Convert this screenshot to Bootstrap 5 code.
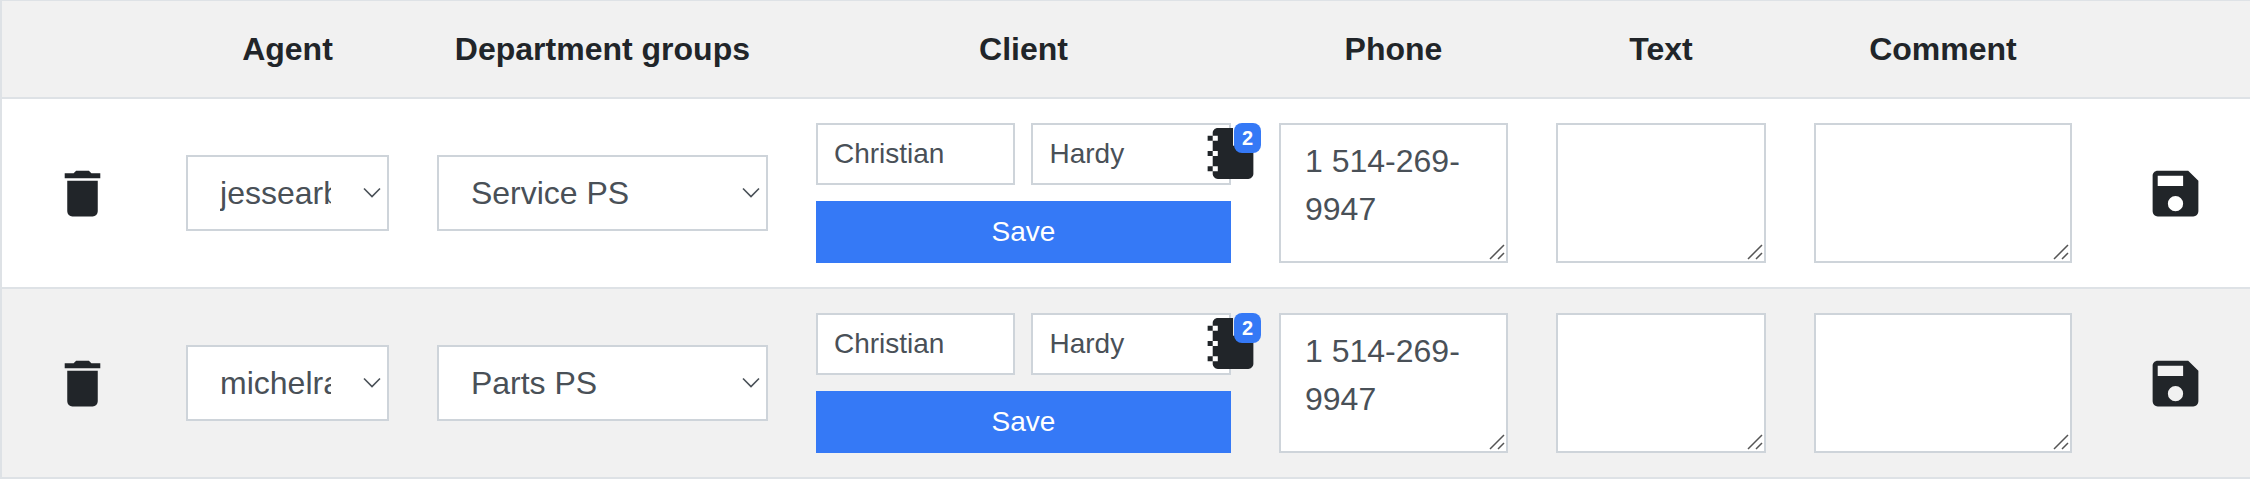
<!DOCTYPE html>
<html lang="en">
<head>
<meta charset="utf-8">
<meta name="viewport" content="width=device-width, initial-scale=1">
<title>Agents</title>
<link rel="stylesheet" href="https://cdn.jsdelivr.net/npm/bootstrap@5.3.0/dist/css/bootstrap.min.css">
<style>
  :root { --line: #dee2e6; --field-line: #ced4da; --field-text: #495057; --brand: #3579f6; --ink: #212529; }
  body { font-family: "Liberation Sans", Arial, sans-serif; font-size: 32px; line-height: 48px; color: var(--ink); background: #fff; }

  .agents-frame { border-top: 1px solid var(--line); border-left: 2px solid var(--line); }
  .agents { table-layout: fixed; border-collapse: separate; border-spacing: 0; color: var(--ink); }
  .agents > * > tr > * { padding: 24px; border: 0; border-bottom: 2px solid var(--line); box-shadow: none; background: transparent; }
  .agents > * > tr > :last-child { padding-right: 18px; }
  .agents thead tr, .agents tbody tr:nth-child(even) { background: #f1f1f1; }
  .col-trash { width: 7.12%; } .col-agent { width: 11.16%; } .col-dept { width: 16.86%; } .col-client { width: 20.6%; }
  .col-phone { width: 12.32%; } .col-text { width: 11.48%; } .col-comment { width: 13.61%; } .col-store { width: 6.85%; }

  .agents .form-control, .agents .form-select { border: 2px solid var(--field-line); border-radius: 0; color: var(--field-text); background-color: #fff; font-size: 32px; line-height: 48px; }
  .agents .form-select { height: 76px; padding: 12px 56px 12px 32px; text-overflow: clip;
    background-image: url("data:image/svg+xml,%3Csvg xmlns='http://www.w3.org/2000/svg' viewBox='0 0 18 12'%3E%3Cpath d='M1 1.5l8 8 8-8' fill='none' stroke='%23495057' stroke-width='1.6'/%3E%3C/svg%3E");
    background-size: 18px 12px; background-position: right 6px center; }
  .agents textarea.form-control { height: 140px; padding: 12px 24px; resize: none; overflow: auto;
    background-image: url("data:image/svg+xml,%3Csvg xmlns='http://www.w3.org/2000/svg' width='20' height='20'%3E%3Cpath d='M4 18L18 4M12 18l6-6' stroke='%23555' stroke-width='1.5'/%3E%3C/svg%3E");
    background-repeat: no-repeat; background-position: right bottom; }
  .agents .name-field { height: 62px; padding: 8px 16px; font-size: 28px; line-height: 42px; }
  .client-grid { display: grid; grid-template-columns: 1fr 1fr; gap: 16px; }
  .client-save { grid-column: 1 / -1; border: 0; border-radius: 0; padding: 10px 16px; font-size: 28px; line-height: 42px; color: #fff; background: var(--brand); }
  .client-save:hover { background: #1f66e8; color: #fff; }

  .icon-btn { padding: 0; border: 0; border-radius: 0; line-height: 0; color: var(--ink); }
  .icon-btn svg { width: 61px; height: 61px; fill: currentColor; display: block; }
  .book-btn { position: absolute; top: 0; right: -30px; z-index: 6; }
  .book-btn .book-count { position: absolute; top: 0; right: 0; padding: 5px 8px; font-size: 20px; line-height: 20px; border-radius: 8px; background: var(--brand); }
</style>
</head>
<body>
<svg class="d-none" aria-hidden="true">
  <symbol id="i-trash" viewBox="0 0 24 24"><path d="M19,4H15.5L14.5,3H9.5L8.5,4H5V6H19M6,19A2,2 0 0,0 8,21H16A2,2 0 0,0 18,19V7H6V19Z"/></symbol>
  <symbol id="i-disk" viewBox="0 0 24 24"><path d="M15,9H5V5H15M12,19A3,3 0 0,1 9,16A3,3 0 0,1 12,13A3,3 0 0,1 15,16A3,3 0 0,1 12,19M17,3H5C3.89,3 3,3.9 3,5V19A2,2 0 0,0 5,21H19A2,2 0 0,0 21,19V7L17,3Z"/></symbol>
  <symbol id="i-book" viewBox="0 0 24 24"><path d="M3,7V5H5V4C5,2.89 5.9,2 7,2H13V9L15.5,7.5L18,9V2H19C20.05,2 21,2.95 21,4V20C21,21.05 20.05,22 19,22H7C5.95,22 5,21.05 5,20V19H3V17H5V13H3V11H5V7H3M7,11H5V13H7V11M7,7V5H5V7H7M7,19V17H5V19H7Z"/></symbol>
</svg>

<main class="agents-frame">
  <table class="table agents align-middle text-center mb-0">
    <colgroup>
      <col class="col-trash"><col class="col-agent"><col class="col-dept"><col class="col-client">
      <col class="col-phone"><col class="col-text"><col class="col-comment"><col class="col-store">
    </colgroup>
    <thead>
      <tr>
        <td></td>
        <th scope="col">Agent</th>
        <th scope="col">Department groups</th>
        <th scope="col">Client</th>
        <th scope="col">Phone</th>
        <th scope="col">Text</th>
        <th scope="col">Comment</th>
        <td></td>
      </tr>
    </thead>
    <tbody>
      <tr>
        <td><button type="button" class="btn icon-btn d-block mx-auto" aria-label="Delete"><svg><use href="#i-trash"/></svg></button></td>
        <td><select class="form-select" aria-label="Agent"><option>jessearb</option></select></td>
        <td><select class="form-select" aria-label="Department groups"><option>Service PS</option></select></td>
        <td>
          <div class="client-grid position-relative">
            <input type="text" class="form-control name-field" value="Christian" aria-label="First name">
            <input type="text" class="form-control name-field" value="Hardy" aria-label="Last name">
            <button type="button" class="btn client-save">Save</button>
            <button type="button" class="btn icon-btn book-btn" aria-label="Contacts"><svg><use href="#i-book"/></svg><span class="badge book-count">2</span></button>
          </div>
        </td>
        <td><textarea class="form-control" aria-label="Phone">1 514-269-9947</textarea></td>
        <td><textarea class="form-control" aria-label="Text"></textarea></td>
        <td><textarea class="form-control" aria-label="Comment"></textarea></td>
        <td><button type="button" class="btn icon-btn d-block mx-auto" aria-label="Save row"><svg><use href="#i-disk"/></svg></button></td>
      </tr>
      <tr>
        <td><button type="button" class="btn icon-btn d-block mx-auto" aria-label="Delete"><svg><use href="#i-trash"/></svg></button></td>
        <td><select class="form-select" aria-label="Agent"><option>michelra</option></select></td>
        <td><select class="form-select" aria-label="Department groups"><option>Parts PS</option></select></td>
        <td>
          <div class="client-grid position-relative">
            <input type="text" class="form-control name-field" value="Christian" aria-label="First name">
            <input type="text" class="form-control name-field" value="Hardy" aria-label="Last name">
            <button type="button" class="btn client-save">Save</button>
            <button type="button" class="btn icon-btn book-btn" aria-label="Contacts"><svg><use href="#i-book"/></svg><span class="badge book-count">2</span></button>
          </div>
        </td>
        <td><textarea class="form-control" aria-label="Phone">1 514-269-9947</textarea></td>
        <td><textarea class="form-control" aria-label="Text"></textarea></td>
        <td><textarea class="form-control" aria-label="Comment"></textarea></td>
        <td><button type="button" class="btn icon-btn d-block mx-auto" aria-label="Save row"><svg><use href="#i-disk"/></svg></button></td>
      </tr>
    </tbody>
  </table>
</main>
<script src="https://cdn.jsdelivr.net/npm/bootstrap@5.3.0/dist/js/bootstrap.bundle.min.js"></script>
</body>
</html>
